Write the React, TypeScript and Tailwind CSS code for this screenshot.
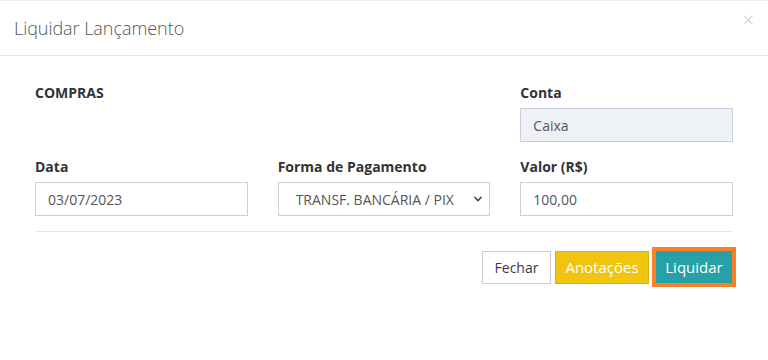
import React from "react";

const font = { fontFamily: '"Open Sans", "Noto Sans", sans-serif' };

const Field = ({
  label,
  children,
}: {
  label: string;
  children?: React.ReactNode;
}) => (
  <div className="flex flex-col gap-[5px]">
    <label className="text-[14px] leading-[20px] font-bold text-[#333]">
      {label}
    </label>
    {children}
  </div>
);

const inputCls =
  "h-[34px] w-full border border-[#c8cfdb] px-[12px] text-[14px] text-[#555] outline-none";

export default function App() {
  return (
    <div className="w-[768px] h-[360px] bg-white border-t border-[#ececec]" style={font}>
      {/* header */}
      <div className="h-[55px] flex items-center justify-between pl-[14px] pr-[14px] border-b border-[#e9e9e9]">
        <div className="text-[18px] font-light text-[#555] tracking-[-0.05px]">
          Liquidar Lançamento
        </div>
        <span className="text-[20px] font-light text-[#c8c8c8] leading-none -mt-[16px]">
          ×
        </span>
      </div>
      {/* body */}
      <div className="px-[35px] pt-[27px]">
        <div className="grid grid-cols-3 gap-x-[30px] gap-y-[15px] w-[698px]">
          <Field label="COMPRAS" />
          <div />
          <Field label="Conta">
            <input
              className={inputCls + " bg-[#eef1f6]"}
              defaultValue="Caixa"
              readOnly
            />
          </Field>
          <Field label="Data">
            <input className={inputCls + " bg-white"} defaultValue="03/07/2023" />
          </Field>
          <Field label="Forma de Pagamento">
            <div className="relative h-[34px] border border-[#c8cfdb] flex items-center pl-[17px] text-[14px] text-[#555]">
              TRANSF. BANCÁRIA / PIX
              <svg
                className="absolute right-[6px] top-[12px]"
                width="10"
                height="8"
                viewBox="0 0 10 8"
                fill="none"
              >
                <path d="M1.5 2l3.5 3.5L8.5 2" stroke="#444" strokeWidth="1.6" />
              </svg>
            </div>
          </Field>
          <Field label="Valor (R$)">
            <input className={inputCls + " bg-white"} defaultValue="100,00" />
          </Field>
        </div>
        <div className="mt-[15px] border-t border-[#e9e9e9] w-[698px]" />
        {/* actions */}
        <div className="flex justify-end w-[697px] mt-[19px]">
          <button className="h-[33px] w-[69px] flex items-center justify-center border border-[#ccc] bg-white text-[14px] text-[#3d3550]">
            Fechar
          </button>
          <button className="h-[33px] w-[94px] ml-[4px] flex items-center justify-center border border-[#d9b20c] bg-[#f1c40f] text-[15px] text-white">
            Anotações
          </button>
          <button className="h-[32px] w-[76px] ml-[7px] flex items-center justify-center bg-[#26a1a8] text-[15px] text-white outline-[4px] outline outline-[#fa8129]">
            Liquidar
          </button>
        </div>
      </div>
    </div>
  );
}
